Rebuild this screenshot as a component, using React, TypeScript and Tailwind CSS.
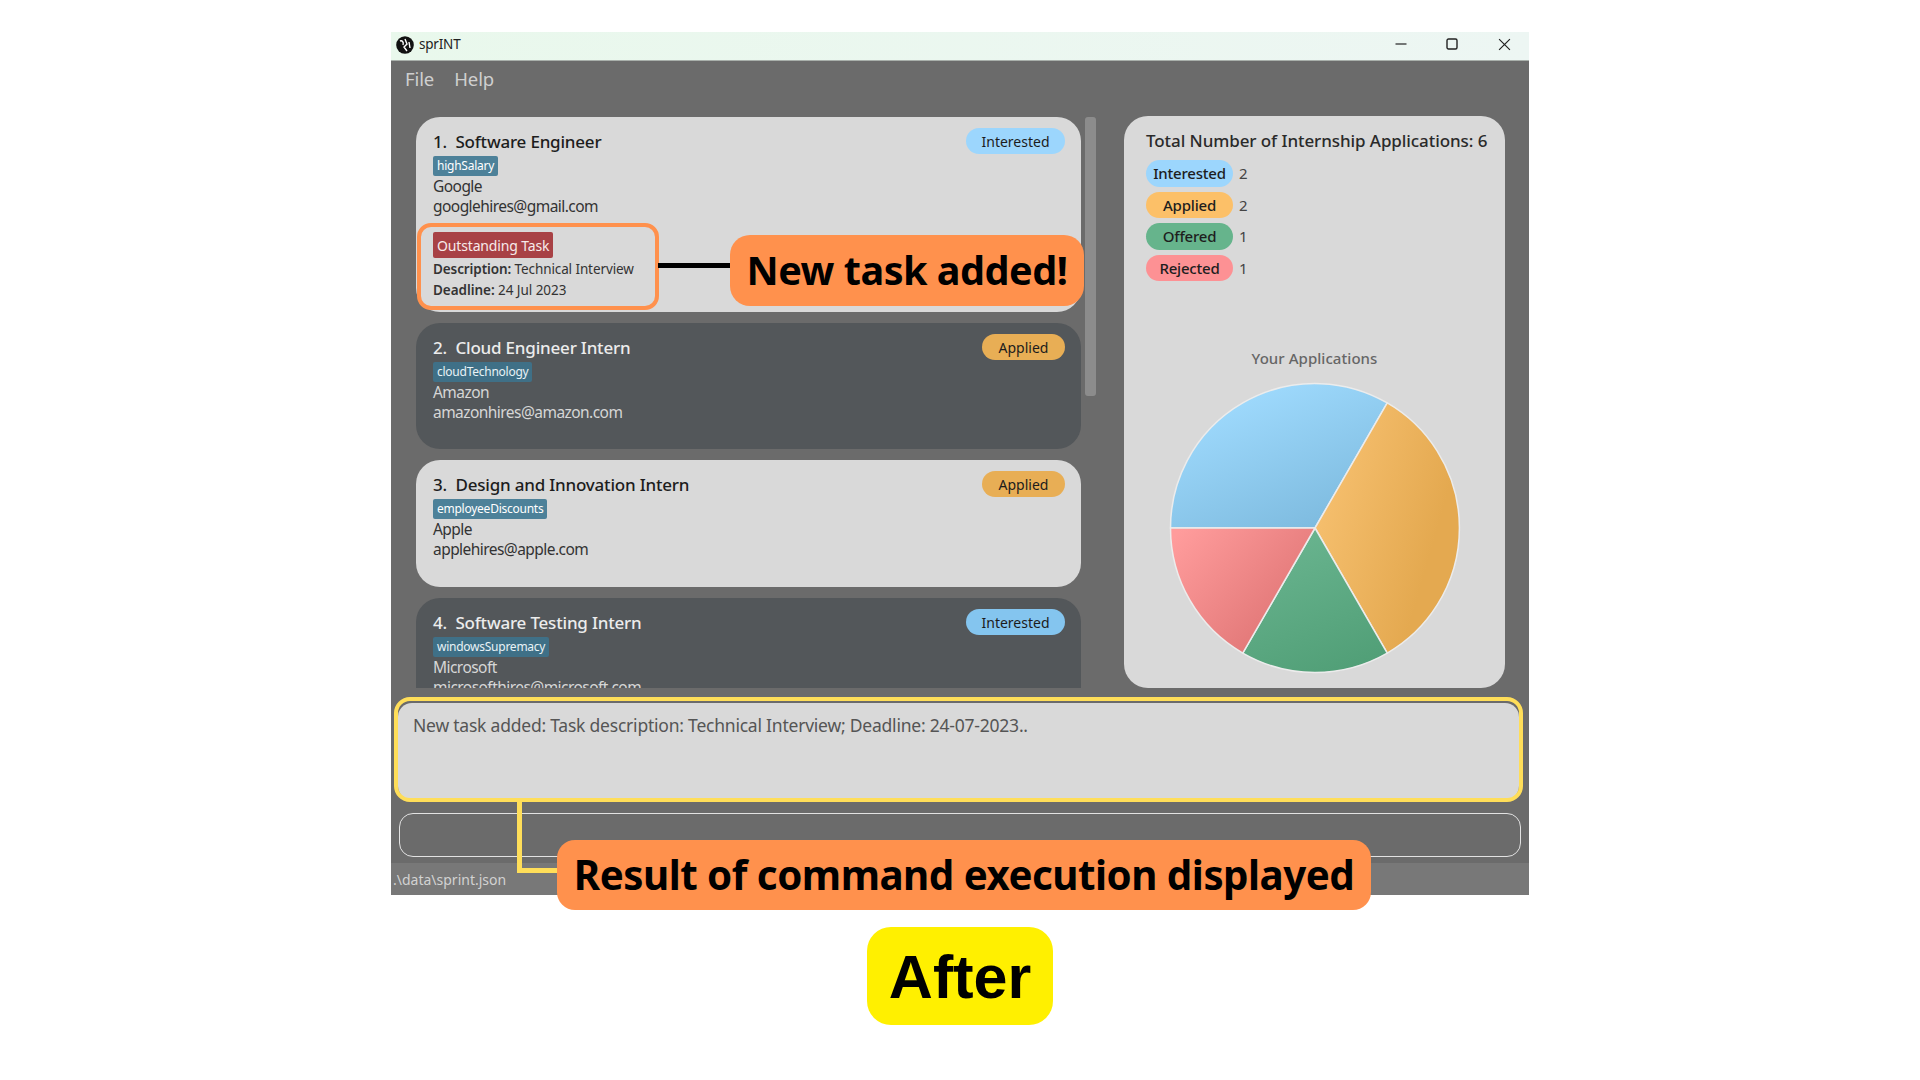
import React from "react";

// ── Types ───────────────────────────────────────
interface Application {
  id: number;
  role: string;
  tag: string;
  company: string;
  email: string;
  status: "Interested" | "Applied";
  dark: boolean;
  height: string;
}

const apps: Application[] = [
  { id: 2, role: "Cloud Engineer Intern", tag: "cloudTechnology", company: "Amazon", email: "amazonhires@amazon.com", status: "Applied", dark: true, height: "h-[126px]" },
  { id: 3, role: "Design and Innovation Intern", tag: "employeeDiscounts", company: "Apple", email: "applehires@apple.com", status: "Applied", dark: false, height: "h-[127px]" },
  { id: 4, role: "Software Testing Intern", tag: "windowsSupremacy", company: "Microsoft", email: "microsofthires@microsoft.com", status: "Interested", dark: true, height: "h-[126px]" },
];

const stats = [
  { label: "Interested", count: 2, bg: "bg-[#9cd6fd]" },
  { label: "Applied", count: 2, bg: "bg-[#fcc068]" },
  { label: "Offered", count: 1, bg: "bg-[#66b48c]" },
  { label: "Rejected", count: 1, bg: "bg-[#fd9194]" },
];

function StatusPill({ status, dark }: { status: string; dark: boolean }) {
  const colour =
    status === "Interested"
      ? dark ? "bg-[#84c5ef] w-[99px]" : "bg-[#9cd6fd] w-[99px]"
      : "bg-[#e8ae55] w-[83px]";
  return (
    <span className={`h-[26px] rounded-full flex items-center justify-center text-[14px] text-[#1c1c1c] shrink-0 ${colour}`}>
      {status}
    </span>
  );
}

function CardHead({ n, role, status, dark }: { n: number; role: string; status: string; dark: boolean }) {
  return (
    <div className="flex items-start justify-between">
      <span className={`h-[26px] leading-[28px] text-[17px] font-medium tracking-[-0.2px] ${dark ? "text-[#ececec]" : "text-[#1d1d1d]"}`}>
        {n}.&nbsp;&nbsp;{role}
      </span>
      <StatusPill status={status} dark={dark} />
    </div>
  );
}

function Tag({ label, dark }: { label: string; dark: boolean }) {
  return (
    <span className={`mt-[2px] self-start h-5 px-[4px] rounded-[2px] flex items-center text-[12px] tracking-[-0.25px] ${dark ? "bg-[#3f7087] text-[#e8f2f6]" : "bg-[#4d8199] text-white"}`}>
      {label}
    </span>
  );
}

function Pie() {
  return (
    <svg width="296" height="296" viewBox="-148 -148 296 296" className="mx-auto mt-[12px]">
      <defs>
        <linearGradient id="blue" x1="0.15" y1="0.1" x2="0.7" y2="0.95">
          <stop offset="0" stopColor="#a1dcff" />
          <stop offset="1" stopColor="#7fbce0" />
        </linearGradient>
        <linearGradient id="orange" x1="0" y1="0.2" x2="1" y2="0.7">
          <stop offset="0" stopColor="#f8c272" />
          <stop offset="0.8" stopColor="#e4a950" />
        </linearGradient>
        <linearGradient id="green" x1="0.3" y1="0" x2="0.7" y2="1">
          <stop offset="0" stopColor="#6ab590" />
          <stop offset="1" stopColor="#519f77" />
        </linearGradient>
        <linearGradient id="red" x1="0" y1="0.1" x2="0.9" y2="0.8">
          <stop offset="0" stopColor="#ff9c9c" />
          <stop offset="1" stopColor="#de7373" />
        </linearGradient>
      </defs>
      <g stroke="#ececec" strokeWidth="1.5" strokeLinejoin="round">
        <path d="M0 0 L-144.5 0 A144.5 144.5 0 0 1 72.25 -125.1 Z" fill="url(#blue)" />
        <path d="M0 0 L72.25 -125.1 A144.5 144.5 0 0 1 72.25 125.1 Z" fill="url(#orange)" />
        <path d="M0 0 L72.25 125.1 A144.5 144.5 0 0 1 -72.25 125.1 Z" fill="url(#green)" />
        <path d="M0 0 L-72.25 125.1 A144.5 144.5 0 0 1 -144.5 0 Z" fill="url(#red)" />
      </g>
    </svg>
  );
}

export default function App() {
  return (
    <div className="relative min-h-[1080px] bg-white pt-8 pl-[391px] font-['Noto_Sans',sans-serif] overflow-hidden">
      {/* App window */}
      <div className="w-[1138px] h-[863px] bg-[#6b6b6b] flex flex-col">
        {/* Title bar */}
        <div className="h-[29px] shrink-0 bg-gradient-to-r from-[#e9f8ec] to-[#edf6f3] flex items-center pl-[5px] border-b border-[#a9b0ab]">
          <svg width="18" height="18" viewBox="0 0 18 18" className="-mt-[2px]">
            <circle cx="9" cy="9" r="8.8" fill="#111" />
            <path d="M4 5 C6 4 8 6 7 9 M9 3 L11 8 L8 11 L11 15 M13 6 L14 12" stroke="#fff" strokeWidth="1.4" fill="none" />
          </svg>
          <span className="ml-[5px] -mt-[3px] text-[13.5px] tracking-[-0.2px] text-[#222]">sprINT</span>
          <div className="ml-auto -mt-[4px] flex items-center h-full">
            <svg width="12" height="12" viewBox="0 0 12 12" className="mr-[39px]">
              <path d="M0.5 6 H11.5" stroke="#222" strokeWidth="1.2" />
            </svg>
            <svg width="12" height="12" viewBox="0 0 12 12" className="mr-[40px]">
              <rect x="1" y="1" width="10" height="10" rx="1.5" stroke="#222" strokeWidth="1.4" fill="none" />
            </svg>
            <svg width="13" height="13" viewBox="0 0 12 12" className="mr-[18px]">
              <path d="M1 1 L11 11 M11 1 L1 11" stroke="#222" strokeWidth="1.1" />
            </svg>
          </div>
        </div>

        {/* Menu bar */}
        <div className="h-[36px] shrink-0 flex items-center pl-[14px] gap-[20px] text-[18.5px] tracking-[-0.1px] text-[#cfcfcf]">
          <span>File</span>
          <span>Help</span>
        </div>

        <div className="mt-[19px] h-[572px] shrink-0 flex">
          {/* Application list */}
          <div className="ml-[25px] w-[665px] h-[571px] mt-[1px] flex flex-col gap-[11px] overflow-hidden">
            <div className="h-[195px] shrink-0 rounded-[24px] bg-[#d9d9d9] pt-[11px] pl-[17px] pr-[16px] flex flex-col">
              <CardHead n={1} role="Software Engineer" status="Interested" dark={false} />
              <Tag label="highSalary" dark={false} />
              <span className="leading-5 text-[15.5px] tracking-[-0.55px] text-[#333]">Google</span>
              <span className="leading-5 text-[15.5px] tracking-[-0.55px] text-[#333]">googlehires@gmail.com</span>
              <span className="mt-[16px] self-start h-[26px] px-[4px] rounded-[2px] bg-[#a84145] text-[#f7eaea] text-[14px] tracking-[-0.15px] flex items-center">
                Outstanding Task
              </span>
              <span className="mt-[1px] leading-[21px] text-[13.5px] tracking-[-0.1px] text-[#333]">
                <b className="font-semibold">Description:</b> Technical Interview
              </span>
              <span className="leading-[21px] text-[13.5px] tracking-[-0.05px] text-[#333]">
                <b className="font-semibold">Deadline:</b> 24 Jul 2023
              </span>
            </div>
            {apps.map((a) => (
              <div
                key={a.id}
                className={`${a.height} shrink-0 rounded-[24px] pt-[11px] pl-[17px] pr-[16px] flex flex-col ${a.dark ? "bg-[#53575a]" : "bg-[#d9d9d9]"}`}
              >
                <CardHead n={a.id} role={a.role} status={a.status} dark={a.dark} />
                <Tag label={a.tag} dark={a.dark} />
                <span className={`leading-5 text-[15.5px] tracking-[-0.55px] ${a.dark ? "text-[#d6d6d6]" : "text-[#333]"}`}>{a.company}</span>
                <span className={`leading-5 text-[15.5px] tracking-[-0.55px] ${a.dark ? "text-[#d6d6d6]" : "text-[#333]"}`}>{a.email}</span>
              </div>
            ))}
          </div>

          {/* Scrollbar */}
          <div className="ml-[4px] mt-[1px] w-[11px] h-[279px] rounded-[3px] bg-[#8c8c8c]" />

          {/* Statistics panel */}
          <div className="ml-[28px] w-[381px] h-[572px] rounded-[24px] bg-[#d9d9d9] pt-[12px] px-[22px]">
            <div className="text-[17px] leading-[26px] font-medium whitespace-nowrap text-[#2a2a2a] tracking-[-0.08px]">
              Total Number of Internship Applications: 6
            </div>
            <div className="mt-[6px] flex flex-col gap-[5px]">
              {stats.map((s) => (
                <div key={s.label} className="flex items-center h-[26.5px]">
                  <span className={`w-[87px] h-full rounded-full flex items-center justify-center text-[15px] font-medium tracking-[-0.2px] text-[#1e1e1e] ${s.bg}`}>
                    {s.label}
                  </span>
                  <span className="ml-[6px] text-[15px] text-[#444]">{s.count}</span>
                </div>
              ))}
            </div>
            <div className="mt-[67px] text-center text-[15px] font-medium leading-[20px] text-[#666] tracking-[0.05px]">Your Applications</div>
            <Pie />
          </div>
        </div>

        {/* Result display */}
        <div className="mt-[15px] ml-[7px] w-[1121px] h-[97px] shrink-0 rounded-[14px] bg-[#d9d9d9] pt-[9px] pl-[15px] text-[17.5px] leading-[26px] text-[#555] tracking-[-0.22px]">
          New task added: Task description: Technical Interview; Deadline: 24-07-2023..
        </div>

        {/* Command box */}
        <div className="mt-[13px] ml-[8px] w-[1122px] h-[44px] shrink-0 rounded-[14px] border border-[#e2e2e2]" />

        {/* Status bar */}
        <div className="mt-[6px] flex-1 bg-[#787878] flex items-center pl-[2px] text-[14px] text-[#d2d2d2]">.\data\sprint.json</div>
      </div>

      {/* Annotations */}
      <div className="absolute left-[417px] top-[223px] w-[242px] h-[87px] rounded-[14px] border-[4px] border-[#ff914d]" />
      <div className="absolute left-[658px] top-[263px] w-[75px] h-[5px] bg-black" />
      <div className="absolute left-[730px] top-[235px] w-[354px] h-[71px] rounded-[20px] bg-[#ff914d] flex items-center justify-center text-[39.6px] font-bold text-black tracking-[-0.5px] whitespace-nowrap">
        New task added!
      </div>
      <div className="absolute left-[394px] top-[697px] w-[1129px] h-[105px] rounded-[16px] border-[4px] border-[#ffde59]" />
      <div className="absolute left-[517px] top-[800px] w-[41px] h-[73px] border-l-[5px] border-b-[5px] border-[#ffde59]" />
      <div className="absolute left-[557px] top-[840px] w-[814px] h-[70px] rounded-[18px] bg-[#ff914d] flex items-center justify-center text-[40.3px] font-bold text-black tracking-[-0.5px] whitespace-nowrap">
        Result of command execution displayed
      </div>
      <div className="absolute left-[867px] top-[927px] w-[186px] h-[98px] rounded-[24px] bg-[#fff000] flex items-center justify-center pt-[3px] text-[61px] font-bold text-black font-['Liberation_Sans',sans-serif]">
        After
      </div>
    </div>
  );
}
